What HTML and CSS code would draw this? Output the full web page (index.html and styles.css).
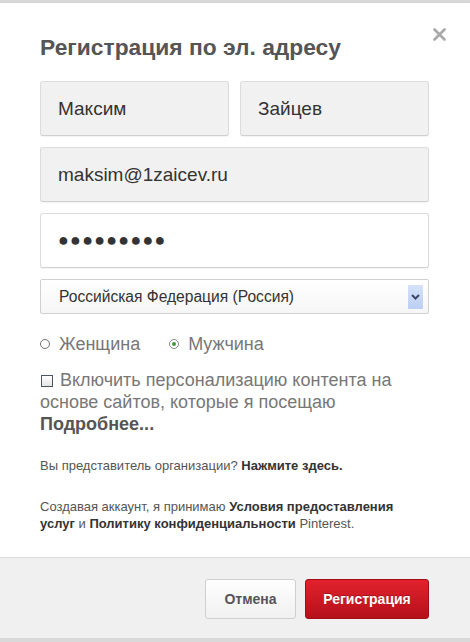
FILE: index.html
```html
<!DOCTYPE html>
<html lang="ru">
<head>
<meta charset="utf-8">
<title>Регистрация</title>
<link rel="stylesheet" href="styles.css">
</head>
<body>
<div class="modal">
  <button class="close" aria-label="Закрыть">
    <svg width="13" height="13" viewBox="0 0 13 13"><path d="M1.5 1.5 L11.5 11.5 M11.5 1.5 L1.5 11.5" stroke="#a8a8a8" stroke-width="2.6" stroke-linecap="round"/></svg>
  </button>
  <div class="content">
    <h1 class="title">Регистрация по эл. адресу</h1>
    <div class="fields">
      <div class="row">
        <div class="field">Максим</div>
        <div class="field">Зайцев</div>
      </div>
      <div class="field">maksim@1zaicev.ru</div>
      <div class="field field-white dots">●●●●●●●●●</div>
      <div class="select">
        <span>Российская Федерация (Россия)</span>
        <span class="arrow"><svg width="9" height="6" viewBox="0 0 9 6"><path d="M1 1 L4.5 4.5 L8 1" fill="none" stroke="#3b4868" stroke-width="2"/></svg></span>
      </div>
    </div>
    <div class="gender">
      <label class="opt"><span class="radio"></span>Женщина</label>
      <label class="opt"><span class="radio checked"></span>Мужчина</label>
    </div>
    <p class="personal"><span class="check"></span>Включить персонализацию контента на<br>основе сайтов, которые я посещаю<br><b>Подробнее...</b></p>
    <p class="small first">Вы представитель организации? <b>Нажмите здесь.</b></p>
    <p class="small">Создавая аккаунт, я принимаю <b>Условия предоставления</b><br><b>услуг</b> и <b>Политику конфиденциальности</b> Pinterest.</p>
  </div>
  <div class="footer">
    <button class="btn btn-cancel">Отмена</button>
    <button class="btn btn-primary">Регистрация</button>
  </div>
</div>
</body>
</html>
```
FILE: styles.css
```css
html {
  background: #d9d9d9;
}
body {
  margin: 0;
  padding-top: 3px;
  font-family: "Liberation Sans", Arial, sans-serif;
}
.modal {
  position: relative;
  background: #fff;
  box-shadow: 0 2px 3px rgba(0, 0, 0, 0.45);
}
.close {
  position: absolute;
  top: 25px;
  right: 24px;
  padding: 0;
  border: 0;
  background: none;
  width: 13px;
  height: 13px;
  display: flex;
}
.content {
  padding: 31px 41px 25px 40px;
}
.title {
  margin: 0;
  font-size: 22.8px;
  line-height: 26px;
  font-weight: bold;
  color: #555;
}
.fields {
  margin-top: 21px;
  display: flex;
  flex-direction: column;
  gap: 11px;
}
.row {
  display: flex;
  gap: 11px;
}
.row .field {
  flex: 1;
}
.field {
  box-sizing: border-box;
  height: 55px;
  display: flex;
  align-items: center;
  padding-left: 17px;
  background: #f1f1f1;
  border: 1px solid #dcdcdc;
  border-bottom-color: #d0d0d0;
  border-radius: 3px;
  box-shadow: 0 1px 1px rgba(0, 0, 0, 0.05);
  font-size: 19px;
  color: #333;
}
.field-white {
  background: #fff;
}
.dots {
  font-size: 18px;
  letter-spacing: 1.2px;
  color: #333;
}
.select {
  box-sizing: border-box;
  height: 35px;
  display: flex;
  align-items: center;
  justify-content: space-between;
  padding: 0 5px 0 18px;
  background: linear-gradient(#fff, #f6f6f6);
  border: 1px solid #d0d0d0;
  border-radius: 2px;
  font-size: 15.6px;
  color: #333;
}
.arrow {
  width: 15px;
  height: 24px;
  display: flex;
  align-items: center;
  justify-content: center;
  background: linear-gradient(#d5e1f8, #bccff2);
  border-radius: 1px;
}
.gender {
  margin-top: 19px;
  display: flex;
  gap: 29px;
  font-size: 18px;
  line-height: 22px;
  color: #777;
}
.opt {
  display: flex;
  align-items: center;
  gap: 9px;
}
.radio {
  box-sizing: border-box;
  width: 10px;
  height: 10px;
  border: 1px solid #6f6f6f;
  border-radius: 50%;
  background: #fff;
  display: flex;
  align-items: center;
  justify-content: center;
}
.radio.checked {
  border-color: #8a8a8a;
}
.radio.checked::after {
  content: "";
  width: 4px;
  height: 4px;
  border-radius: 50%;
  background: #3f9a3f;
}
.personal {
  margin: 14px 0 0;
  font-size: 18px;
  line-height: 22px;
  color: #777;
}
.personal b {
  color: #555;
}
.check {
  display: inline-block;
  box-sizing: border-box;
  width: 12px;
  height: 12px;
  margin: 0 7px 0 1px;
  border: 1px solid #4d5563;
  background: linear-gradient(#fff, #e4e4e4);
  vertical-align: -1px;
}
.small {
  margin: 24px 0 0;
  font-size: 13px;
  line-height: 17px;
  color: #555;
}
.small.first {
  margin-top: 22px;
}
.small b {
  color: #333;
}
.footer {
  border-top: 1px solid #dadada;
  background: #f0f0f0;
  padding: 21px 41px 19px 0;
  display: flex;
  justify-content: flex-end;
  gap: 9px;
}
.btn {
  height: 40px;
  padding: 0;
  border-radius: 3px;
  font-family: "Liberation Sans", Arial, sans-serif;
  font-size: 14px;
  font-weight: bold;
}
.btn-cancel {
  width: 91px;
  background: linear-gradient(#fff, #f0f0f0);
  border: 1px solid #cfcfcf;
  color: #555;
}
.btn-primary {
  width: 124px;
  background: linear-gradient(#e2222d, #b5101b);
  border: 1px solid #a50d16;
  color: #fff;
  text-shadow: 0 -1px 0 rgba(0, 0, 0, 0.25);
}
```
